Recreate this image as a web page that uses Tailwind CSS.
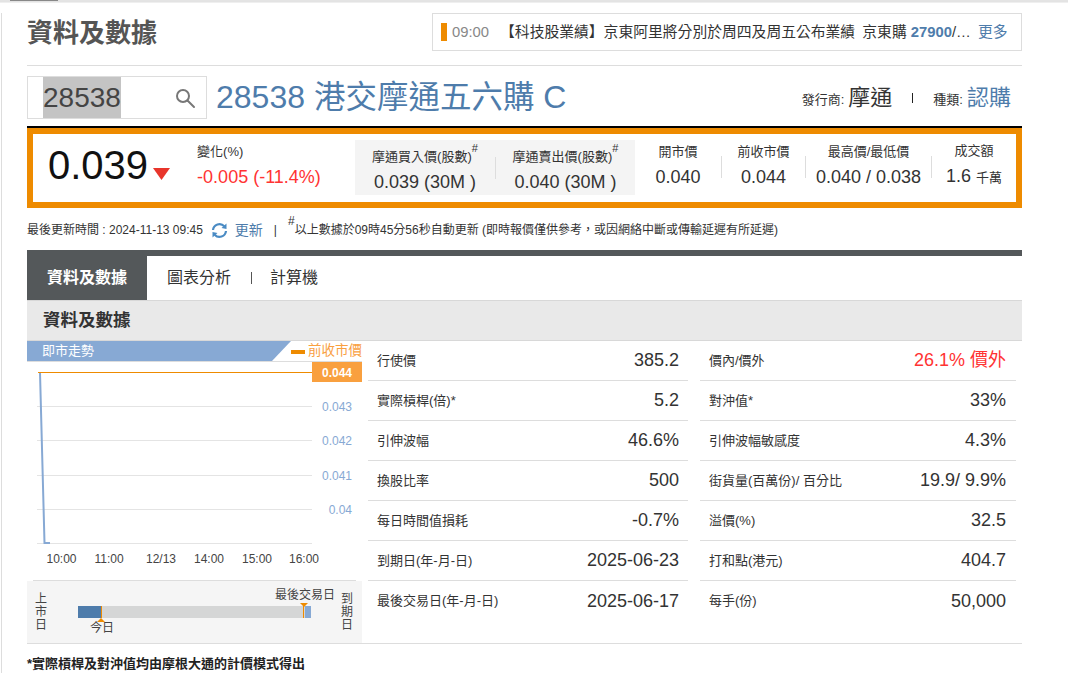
<!DOCTYPE html>
<html lang="zh-Hant">
<head>
<meta charset="utf-8">
<title>28538 資料及數據</title>
<script src="https://cdn.jsdelivr.net/npm/@tailwindcss/browser@4"></script>
</head>
<body class="bg-white text-[#333] font-['Liberation_Sans','Noto_Sans_CJK_TC',sans-serif] overflow-hidden">
<div class="h-[673px] w-[1068px] overflow-hidden">
  <!-- top strip -->
  <div class="h-[3px] bg-gradient-to-b from-[#dddddd] to-[#f5f5f5] border-t border-[#e4e4e4]">
    <div class="ml-[10px] w-[48px] h-px -mt-px bg-[#888]"></div>
  </div>

  <div class="ml-[1px] mt-[10px] border-l border-[#dddddd] pl-[25px] w-[1021px]">
    <!-- heading + news -->
    <div class="flex justify-between items-start h-[53px] border-b border-[#dddddd]">
      <h1 class="mt-[1px] text-[26px] leading-[38px] font-bold text-[#555]">資料及數據</h1>
      <div class="w-[590px] h-[38px] border border-[#dddddd] flex items-center pl-[8px] text-[14.8px] whitespace-nowrap">
        <span class="w-[6px] h-[18px] bg-[#ee8b00]"></span>
        <span class="ml-[5px] text-[#888]">09:00</span>
        <span class="ml-[11px]">【科技股業績】京東阿里將分別於周四及周五公布業績 <span class="ml-[3px]">京東購</span> <b class="text-[#4e7cab]">27900</b>/…</span>
        <span class="ml-[7px] text-[#4e7cab]">更多</span>
      </div>
    </div>

    <!-- search + warrant name -->
    <div class="flex items-center h-[43px] mt-[10px]">
      <div class="w-[180px] h-[43px] border border-[#dddddd] flex items-center justify-between pl-[15px] pr-[10px] shrink-0">
        <span class="bg-[#c4c4c4] h-[41px] leading-[41px] text-[28px] text-[#444]">28538</span>
        <svg class="w-[22px] h-[22px]" viewBox="0 0 22 22" fill="none" stroke="#777" stroke-width="2"><circle cx="9" cy="9" r="6"/><path d="M13.5 13.5 20 20" stroke-linecap="round"/></svg>
      </div>
      <h2 class="ml-[9px] text-[32px] text-[#4e7cab] whitespace-nowrap">28538 <span class="text-[31.5px]">港交摩通五六購</span> C</h2>
      <div class="ml-auto mr-[11px] flex items-center whitespace-nowrap">
        <span class="text-[13px] mt-[5px]">發行商:</span>
        <span class="ml-[4px] text-[22px]">摩通</span>
        <span class="ml-[20px] w-px h-[10px] bg-[#222]"></span>
        <span class="ml-[20px] text-[13px] mt-[5px]">種類:</span>
        <span class="ml-[4px] text-[22px] text-[#4e7cab]">認購</span>
      </div>
    </div>

    <!-- quote box -->
    <div class="mt-[7px] h-[82px] border-t-2 border-black">
      <div class="h-[80px] border-[6px] border-[#ee8b00] flex items-stretch">
        <div class="w-[322px] shrink-0 flex pl-[15px]">
          <span class="text-[40px] leading-[62px] text-[#111]">0.039</span>
          <svg class="ml-[5px] mt-[34px] w-[17px] h-[12px]" viewBox="0 0 17 12"><polygon points="0,0 17,0 8.5,12" fill="#e8352b"/></svg>
          <div class="ml-[27px] pt-[8px]">
            <div class="text-[13px] leading-[20px]">變化(%)</div>
            <div class="text-[18px] leading-[30px] text-[#f33] whitespace-nowrap">-0.005 (-11.4%)</div>
          </div>
        </div>
        <div class="w-[280px] h-[55px] mt-[6px] pt-[7px] bg-[#f4f4f4] flex items-start shrink-0">
          <div class="w-[140px] text-center">
            <div class="text-[13px] leading-[20px] whitespace-nowrap">摩通買入價(股數)<sup class="text-[11px] align-[4px] leading-none">#</sup></div>
            <div class="mt-[3px] text-[18px] leading-[24px]">0.039 (30M )</div>
          </div>
          <div class="w-px h-[22px] mt-[10px] bg-[#dddddd]"></div>
          <div class="w-[139px] text-center">
            <div class="text-[13px] leading-[20px] whitespace-nowrap">摩通賣出價(股數)<sup class="text-[11px] align-[4px] leading-none">#</sup></div>
            <div class="mt-[3px] text-[18px] leading-[24px]">0.040 (30M )</div>
          </div>
        </div>
        <div class="flex-1 flex items-center pb-[2px] text-center">
          <div class="w-[86px]">
            <div class="text-[13px] leading-[20px]">開市價</div>
            <div class="text-[18px] leading-[30px]">0.040</div>
          </div>
          <div class="w-px h-[22px] bg-[#dddddd]"></div>
          <div class="w-[83px]">
            <div class="text-[13px] leading-[20px]">前收市價</div>
            <div class="text-[18px] leading-[30px]">0.044</div>
          </div>
          <div class="w-px h-[22px] bg-[#dddddd]"></div>
          <div class="w-[125px]">
            <div class="text-[13px] leading-[20px]">最高價/最低價</div>
            <div class="text-[18px] leading-[30px]">0.040 / 0.038</div>
          </div>
          <div class="w-px h-[22px] bg-[#dddddd]"></div>
          <div class="w-[84px]">
            <div class="text-[13px] leading-[20px]">成交額</div>
            <div class="text-[18px] leading-[30px]">1.6 <span class="text-[13px]">千萬</span></div>
          </div>
        </div>
      </div>
    </div>

    <!-- update line -->
    <div class="mt-[10px] h-[24px] flex items-center text-[12px] whitespace-nowrap">
      <span>最後更新時間 : 2024-11-13 09:45</span>
      <svg class="ml-[8px] w-[17px] h-[17px]" viewBox="0 0 17 17" fill="none" stroke="#4a8bc4" stroke-width="2.2"><path d="M2 8a6.5 6.5 0 0 1 11.3-3.7"/><path d="M15 9a6.5 6.5 0 0 1-11.3 3.7"/><polygon points="15.5,1.5 15.5,7 10.5,6" fill="#4a8bc4" stroke="none"/><polygon points="1.5,15.5 1.5,10 6.5,11" fill="#4a8bc4" stroke="none"/></svg>
      <span class="ml-[7px] text-[14px] text-[#4e7cab]">更新</span>
      <span class="ml-[11px]">|</span>
      <span class="ml-[11px]"><sup class="text-[12px] align-[3px] leading-none">#</sup>以上數據於09時45分56秒自動更新 (即時報價僅供參考，或因網絡中斷或傳輸延遲有所延遲)</span>
    </div>

    <!-- tabs -->
    <div class="mt-[8px] border-t-[6px] border-[#54585a] h-[50px] flex items-stretch">
      <div class="w-[120px] bg-[#54585a] text-white font-bold text-[16px] flex items-center justify-center">資料及數據</div>
      <div class="flex items-center text-[16px] text-[#333] pl-[20px]">
        <span>圖表分析</span>
        <span class="ml-[20px] w-px h-[12px] bg-[#555]"></span>
        <span class="ml-[18px]">計算機</span>
      </div>
    </div>

    <div class="h-[41px] bg-[#e9e9e9] border-y border-[#d8d8d8] flex items-center pl-[16px] text-[17.5px] font-bold text-[#333]">資料及數據</div>

    <!-- chart + tables -->
    <div class="flex h-[303px] border-b border-[#dddddd]">
      <div class="w-[335px] shrink-0 flex flex-col">
        <div class="h-[21px] border-b border-[#dddddd] flex items-start relative">
          <div class="w-[264px] h-[20px] bg-[#87a9d4] text-white text-[13px] leading-[20px] pl-[15px] [clip-path:polygon(0_0,264px_0,245px_100%,0_100%)]">即市走勢</div>
          <span class="absolute left-[264px] top-[9px] w-[14px] h-[4px] bg-[#ee8b00]"></span>
          <span class="absolute right-0 top-0 text-[13.5px] leading-[20px] text-[#f9a03f]">前收市價</span>
        </div>
        <svg class="w-[335px] h-[218px]" viewBox="0 0 335 218" font-size="12">
          <g stroke="#e4e4e4" stroke-width="1">
            <line x1="10" x2="285" y1="44.5" y2="44.5"/>
            <line x1="10" x2="285" y1="78.5" y2="78.5"/>
            <line x1="10" x2="285" y1="113.5" y2="113.5"/>
            <line x1="10" x2="285" y1="147.5" y2="147.5"/>
            <line x1="10" x2="285" y1="181.5" y2="181.5"/>
          </g>
          <polyline points="13,10.5 17.5,181 23,181" fill="none" stroke="#87a9d4" stroke-width="2"/>
          <rect x="11" y="10" width="274" height="1" fill="#ee8b00"/>
          <rect x="285" y="0" width="50" height="20" fill="#f9a03f"/>
          <text x="325" y="14.5" text-anchor="end" fill="#fff" font-weight="bold">0.044</text>
          <g fill="#87a9d4" text-anchor="end">
            <text x="325" y="49">0.043</text>
            <text x="325" y="83">0.042</text>
            <text x="325" y="118">0.041</text>
            <text x="325" y="152">0.04</text>
          </g>
          <g fill="#444" text-anchor="middle">
            <text x="34.500" y="201">10:00</text>
            <text x="82" y="201">11:00</text>
            <text x="134" y="201">12/13</text>
            <text x="182" y="201">14:00</text>
            <text x="230" y="201">15:00</text>
            <text x="277" y="201">16:00</text>
          </g>
        </svg>
        <!-- life span bar -->
        <div class="ml-[6px] w-[323px] h-px bg-[#dddddd]"></div>
        <div class="flex-1 bg-[#f5f5f5] flex items-center text-[#444]">
          <div class="w-[12px] ml-[8px] mr-[31px] text-[12px] leading-[13px] shrink-0">上市日</div>
          <div class="w-[233px] h-[12px] bg-[#d5d6d6] flex justify-between relative shrink-0">
            <span class="w-[24px] bg-[#4e7cab] border-r border-[#ee8b00]"></span>
            <span class="w-[6px] bg-[#87a9d4]"></span>
            <span class="absolute left-[225px] top-0 w-px h-[12px] bg-[#ee8b00]"></span>
            <svg class="absolute left-[19px] top-[12px] w-[8px] h-[4px]" viewBox="0 0 8 4"><polygon points="4,0 8,4 0,4" fill="#ee8b00"/></svg>
            <svg class="absolute left-[222px] -top-[3px] w-[8px] h-[4px]" viewBox="0 0 8 4"><polygon points="0,0 8,0 4,4" fill="#ee8b00"/></svg>
            <span class="absolute left-[197px] -top-[19px] text-[12px] leading-[16px] whitespace-nowrap">最後交易日</span>
            <span class="absolute left-[12px] top-[14px] text-[12px] leading-[16px] whitespace-nowrap">今日</span>
          </div>
          <div class="ml-[30px] w-[12px] text-[12px] leading-[13px] shrink-0">到期日</div>
        </div>
      </div>

      <div class="w-[320px] ml-[6px] shrink-0 text-[13px]">
        <div class="h-[40px] border-b border-[#dddddd] flex justify-between items-center px-[9px]"><span>行使價</span><span class="text-[18px]">385.2</span></div>
        <div class="h-[40px] border-b border-[#dddddd] flex justify-between items-center px-[9px]"><span>實際槓桿(倍)*</span><span class="text-[18px]">5.2</span></div>
        <div class="h-[40px] border-b border-[#dddddd] flex justify-between items-center px-[9px]"><span>引伸波幅</span><span class="text-[18px]">46.6%</span></div>
        <div class="h-[40px] border-b border-[#dddddd] flex justify-between items-center px-[9px]"><span>換股比率</span><span class="text-[18px]">500</span></div>
        <div class="h-[40px] border-b border-[#dddddd] flex justify-between items-center px-[9px]"><span>每日時間值損耗</span><span class="text-[18px]">-0.7%</span></div>
        <div class="h-[40px] border-b border-[#dddddd] flex justify-between items-center px-[9px]"><span>到期日(年-月-日)</span><span class="text-[18px]">2025-06-23</span></div>
        <div class="h-[40px] flex justify-between items-center px-[9px]"><span>最後交易日(年-月-日)</span><span class="text-[18px]">2025-06-17</span></div>
      </div>

      <div class="w-[316px] ml-[12px] shrink-0 text-[13px]">
        <div class="h-[40px] border-b border-[#dddddd] flex justify-between items-center pl-[9px] pr-[10px]"><span>價內/價外</span><span class="text-[18px] text-[#f33]">26.1% 價外</span></div>
        <div class="h-[40px] border-b border-[#dddddd] flex justify-between items-center pl-[9px] pr-[10px]"><span>對沖值*</span><span class="text-[18px]">33%</span></div>
        <div class="h-[40px] border-b border-[#dddddd] flex justify-between items-center pl-[9px] pr-[10px]"><span>引伸波幅敏感度</span><span class="text-[18px]">4.3%</span></div>
        <div class="h-[40px] border-b border-[#dddddd] flex justify-between items-center pl-[9px] pr-[10px]"><span>街貨量(百萬份)/ 百分比</span><span class="text-[18px]">19.9/ 9.9%</span></div>
        <div class="h-[40px] border-b border-[#dddddd] flex justify-between items-center pl-[9px] pr-[10px]"><span>溢價(%)</span><span class="text-[18px]">32.5</span></div>
        <div class="h-[40px] border-b border-[#dddddd] flex justify-between items-center pl-[9px] pr-[10px]"><span>打和點(港元)</span><span class="text-[18px]">404.7</span></div>
        <div class="h-[40px] flex justify-between items-center pl-[9px] pr-[10px]"><span>每手(份)</span><span class="text-[18px]">50,000</span></div>
      </div>
    </div>

    <div class="mt-[11px] text-[13px] leading-[18px] font-bold text-[#222]">*實際槓桿及對沖值均由摩根大通的計價模式得出</div>
  </div>
</div>
</body>
</html>
